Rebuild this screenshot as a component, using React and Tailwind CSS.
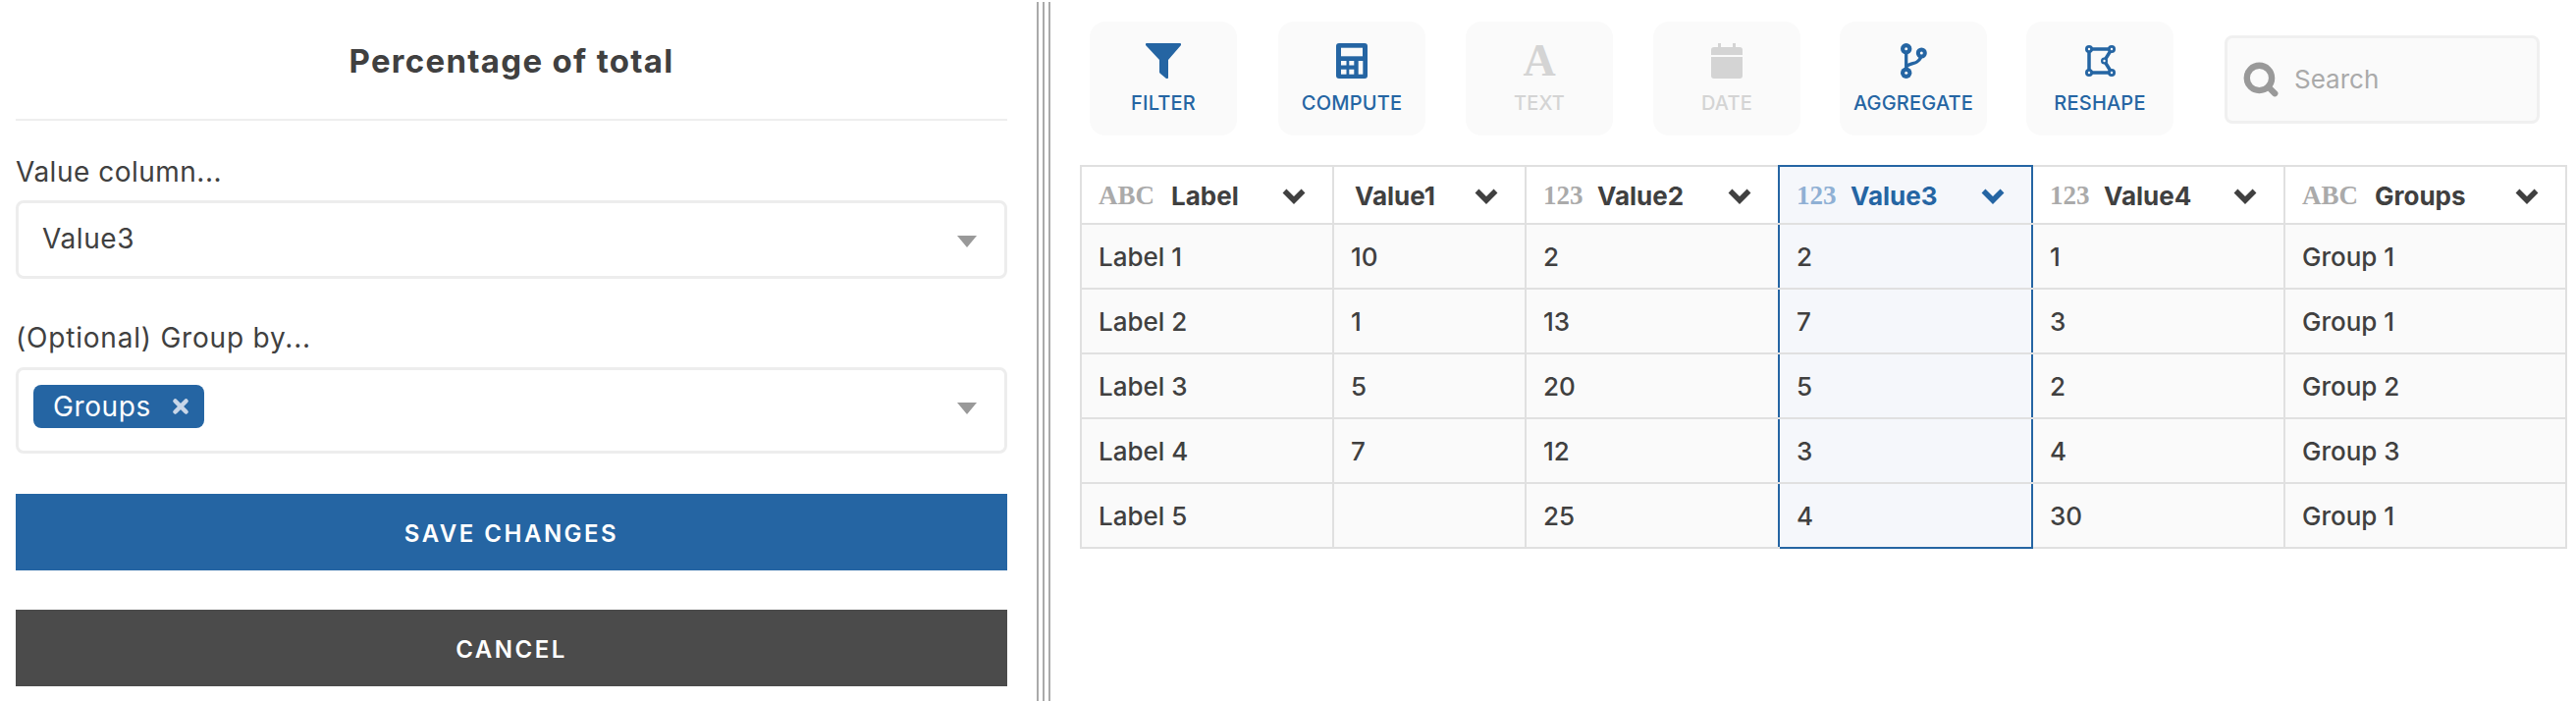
import React from "react";
import { Search, X } from "lucide-react";

const font = "font-['Inter','Liberation_Sans',sans-serif]";

const columns = [
  { type: "ABC", name: "Label", width: "w-[257px]" },
  { type: "", name: "Value1", width: "w-[196px]" },
  { type: "123", name: "Value2", width: "w-[258px]" },
  { type: "123", name: "Value3", width: "w-[258px]", active: true },
  { type: "123", name: "Value4", width: "w-[257px]" },
  { type: "ABC", name: "Groups", width: "w-[287px]" },
];

const rows = [
  ["Label 1", "10", "2", "2", "1", "Group 1"],
  ["Label 2", "1", "13", "7", "3", "Group 1"],
  ["Label 3", "5", "20", "5", "2", "Group 2"],
  ["Label 4", "7", "12", "3", "4", "Group 3"],
  ["Label 5", "", "25", "4", "30", "Group 1"],
];

function FilterIcon() {
  return (
    <svg width="36" height="36" viewBox="0 0 36 36" fill="currentColor">
      <path d="M1 0h34c1 0 1.500 1 1 2L23 17v18c0 1-1 1.500-2 1l-6-5c-.6-.5-1-1-1-2V17L0 2C-.5 1 0 0 1 0z" />
    </svg>
  );
}

function CalcIcon() {
  return (
    <svg width="32" height="36" viewBox="0 0 32 36">
      <rect width="32" height="36" rx="3" fill="currentColor" />
      <rect x="5" y="4.700" width="22" height="8.600" fill="#fafafa" />
      <g fill="#fafafa">
        <rect x="5" y="18" width="5.500" height="4.500" />
        <rect x="13.300" y="18" width="5" height="4.500" />
        <rect x="5" y="26.700" width="5.500" height="5" />
        <rect x="13.300" y="26.700" width="5" height="5" />
        <rect x="22.700" y="18" width="4.600" height="13.700" />
      </g>
    </svg>
  );
}

function TextIcon() {
  return (
    <span className="block h-9 font-['Liberation_Serif',serif] font-bold text-[46px] leading-9">A</span>
  );
}

function DateIcon() {
  return (
    <svg width="32" height="36" viewBox="0 0 32 36" fill="currentColor">
      <path d="M7 0h3v4h12V0h3v4h4c2 0 3 1 3 3v5H0V7c0-2 1-3 3-3h4z" />
      <path d="M0 14h32v19c0 2-1 3-3 3H3c-2 0-3-1-3-3z" />
    </svg>
  );
}

function AggregateIcon() {
  return (
    <svg width="27" height="36" viewBox="0 0 27 36" fill="none" stroke="currentColor" strokeWidth="3.300">
      <path d="M5.700 6v24M5.700 24c3-3.500 8-3 11-5s4.500-4 4.500-8" />
      <g fill="currentColor" stroke="none">
        <circle cx="5.700" cy="5.700" r="5.700" />
        <circle cx="5.700" cy="30.300" r="5.700" />
        <circle cx="21.300" cy="10" r="5.500" />
      </g>
      <g fill="#fafafa" stroke="none">
        <circle cx="5.700" cy="5.700" r="1.500" />
        <circle cx="5.700" cy="30.300" r="1.500" />
        <circle cx="21.300" cy="10" r="1.500" />
      </g>
    </svg>
  );
}

function ReshapeIcon() {
  return (
    <svg width="31" height="32" viewBox="0 0 31 32" fill="none" stroke="currentColor" strokeWidth="3.500">
      <path d="M4 4h23l-7.500 12L27 28H4z" />
      <g fill="currentColor" stroke="none">
        <circle cx="4" cy="4" r="4" />
        <circle cx="27" cy="4" r="4" />
        <circle cx="4" cy="28" r="4" />
        <circle cx="27" cy="28" r="4" />
        <circle cx="19.500" cy="16" r="3.500" />
      </g>
      <g fill="#fafafa" stroke="none">
        <circle cx="4" cy="4" r="1.200" />
        <circle cx="27" cy="4" r="1.200" />
        <circle cx="4" cy="28" r="1.200" />
        <circle cx="27" cy="28" r="1.200" />
        <circle cx="19.500" cy="16" r="1.200" />
      </g>
    </svg>
  );
}

function Chevron() {
  return (
    <svg width="24" height="17" viewBox="0 0 24 17" fill="none" stroke="currentColor" strokeWidth="5.500" strokeLinejoin="miter" className="ml-auto mr-[27px]">
      <path d="M2.500 3.500L12 13l9.500-9.500" />
    </svg>
  );
}

function ToolButton({ icon, label, disabled, className }) {
  const color = disabled ? "text-[#d4d4d4]" : "text-[#2565a3]";
  return (
    <button className={`${color} ${className} w-[150px] h-[116px] rounded-2xl bg-[#fafafa] flex flex-col items-center pt-[22px]`}>
      <span className="h-9 flex items-center justify-center">{icon}</span>
      <span className="mt-[13px] text-[20px] leading-6 font-medium tracking-[0.2px]">{label}</span>
    </button>
  );
}

function Select({ children, className }) {
  return (
    <div className={`border-[3px] border-[#ededed] rounded-lg flex items-start justify-between ${className}`}>
      {children}
      <span className="mt-[33px] mr-[28px] w-0 h-0 border-x-[10px] border-x-transparent border-t-[12px] border-t-[#999]" />
    </div>
  );
}

function LeftPanel() {
  return (
    <div className="w-[1010px] ml-4 shrink-0">
      <h1 className="h-[123px] pt-[43px] border-b-2 border-[#eeeeee] text-center text-[33px] leading-[38px] font-bold tracking-[1.3px]">
        Percentage of total
      </h1>
      <div className="mt-[36px] h-[33px] text-[28px] leading-[33px] tracking-[0.5px]">Value column...</div>
      <Select className="mt-3 h-[80px]">
        <span className="ml-[24px] mt-[20px] text-[28px] leading-[33px] tracking-[0.6px]">Value3</span>
      </Select>
      <div className="mt-[44px] h-[33px] text-[28px] leading-[33px] tracking-[0.8px]">(Optional) Group by...</div>
      <Select className="mt-[13px] h-[88px]">
        <span className="ml-[15px] mt-[15px] h-[44px] w-[174px] rounded-lg bg-[#2565a3] text-white flex items-center pl-[20px] text-[28px] tracking-[0.6px]">
          Groups
          <X size={22} strokeWidth={5} className="ml-[19px] text-[#c8d6e8]" />
        </span>
      </Select>
      <button className="mt-[41px] pt-1 w-full h-[78px] bg-[#2565a3] text-white text-[24px] font-semibold tracking-[2.5px]">
        SAVE CHANGES
      </button>
      <button className="mt-[40px] pt-1 w-full h-[78px] bg-[#4b4b4b] text-white text-[24px] font-semibold tracking-[2.5px]">
        CANCEL
      </button>
    </div>
  );
}

function headerBorder(i) {
  if (i === 3) return "border-[#2565a3] border-b-[#e0e0e0] bg-[#f5f7fb] text-[#2565a3]";
  if (i === 2) return "border-[#e0e0e0] border-r-[#2565a3]";
  return "border-[#e0e0e0]";
}

function cellBorder(i, last) {
  if (i === 3) {
    return `border-x-[#2565a3] border-t-[#e0e0e0] bg-[#f5f7fb] ${last ? "border-b-[#2565a3]" : "border-b-[#e0e0e0]"}`;
  }
  if (i === 2) return "border-[#e0e0e0] border-r-[#2565a3] bg-[#fafafa]";
  return "border-[#e0e0e0] bg-[#fafafa]";
}

function DataTable() {
  return (
    <table className="mt-[30px] ml-[30px] border-collapse table-fixed w-[1513px]">
      <thead>
        <tr className="h-[59px]">
          {columns.map((c, i) => (
            <th key={c.name} className={`${c.width} p-0 border-2 ${headerBorder(i)}`}>
              <div className="flex items-center pt-[2px] pl-[17px] text-[26px] font-bold">
                {c.type && (
                  <span
                    className={`font-['Liberation_Serif',serif] text-left text-[27px] ${c.type === "ABC" ? "w-[74px]" : "w-[55px]"} ${
                      c.active ? "text-[#8fb0d4]" : "text-[#aaaaaa]"
                    }`}
                  >
                    {c.type}
                  </span>
                )}
                <span className={c.type ? "" : "ml-[4px]"}>{c.name}</span>
                <Chevron />
              </div>
            </th>
          ))}
        </tr>
      </thead>
      <tbody>
        {rows.map((row, r) => (
          <tr key={row[0]} className="h-[66px]">
            {row.map((cell, i) => (
              <td
                key={i}
                className={`p-0 pl-[17px] text-[26px] font-medium border-2 ${cellBorder(i, r === rows.length - 1)}`}
              >
                {cell}
              </td>
            ))}
          </tr>
        ))}
      </tbody>
    </table>
  );
}

function RightPanel() {
  return (
    <div className="flex-1 min-w-0">
      <div className="flex items-start mt-[22px] ml-[40px]">
        <ToolButton icon={<FilterIcon />} label="FILTER" />
        <ToolButton icon={<CalcIcon />} label="COMPUTE" className="ml-[42px]" />
        <ToolButton icon={<TextIcon />} label="TEXT" disabled className="ml-[41px]" />
        <ToolButton icon={<DateIcon />} label="DATE" disabled className="ml-[41px]" />
        <ToolButton icon={<AggregateIcon />} label="AGGREGATE" className="ml-[40px]" />
        <ToolButton icon={<ReshapeIcon />} label="RESHAPE" className="ml-[40px]" />
        <div className="ml-[52px] mt-[14px] w-[321px] h-[90px] border-[3px] border-[#f0f0f0] rounded-lg bg-[#fafafa] flex items-center pl-[15px]">
          <Search size={38} strokeWidth={4} className="text-[#999] shrink-0" />
          <span className="ml-[15px] mb-[2px] text-[26px] text-[#aaaaaa]">Search</span>
        </div>
      </div>
      <DataTable />
    </div>
  );
}

export default function App() {
  return (
    <div className={`${font} h-[714px] w-[2624px] bg-white text-[#404040] flex overflow-hidden`}>
      <LeftPanel />
      <div className="ml-[30px] mt-[2px] w-[14px] shrink-0 flex justify-between">
        <div className="w-[2px] bg-[#aaaaaa]" />
        <div className="w-[2px] bg-[#aaaaaa]" />
        <div className="w-[2px] bg-[#aaaaaa]" />
      </div>
      <RightPanel />
    </div>
  );
}
